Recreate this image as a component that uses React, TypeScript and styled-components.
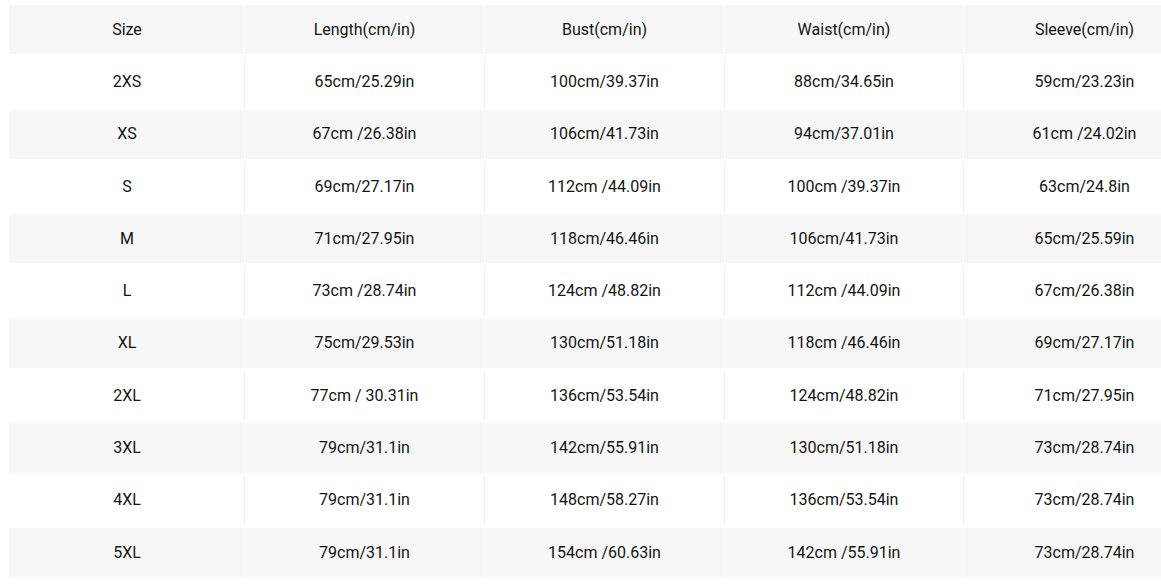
import React from "react";
import styled, { createGlobalStyle } from "styled-components";

const Global = createGlobalStyle`
  html, body { margin: 0; padding: 0; background: #ffffff; }
  body { font-family: Roboto, "Liberation Sans", Arial, sans-serif; overflow: hidden; }
`;

const Page = styled.div`
  width: 1161px;
  height: 586px;
  overflow: hidden;
  padding: 4px 0 0 9px;
  box-sizing: border-box;
`;

const Table = styled.div`
  display: flex;
  flex-direction: column;
  width: 1196px;
`;

const Row = styled.div<{ $shade: boolean }>`
  display: grid;
  grid-template-columns: 235px 240px 240px 239px 242px;
  height: 52.3px;
  box-sizing: border-box;
  border-top: 1px solid #ffffff;
  border-bottom: 2px solid #ffffff;
  background: ${(p) => (p.$shade ? "#f7f7f7" : "#ffffff")};
`;

const Cell = styled.div<{ $shade: boolean; $first?: boolean }>`
  display: flex;
  align-items: center;
  justify-content: center;
  padding-bottom: 1px;
  font-size: 16px;
  color: #141414;
  border-left: 1px solid ${(p) => (p.$first ? "transparent" : p.$shade ? "#ffffff" : "#efefef")};
  white-space: pre;
`;

const header = ["Size", "Length(cm/in)", "Bust(cm/in)", "Waist(cm/in)", "Sleeve(cm/in)"];

const rows: string[][] = [
  ["2XS", "65cm/25.29in", "100cm/39.37in", "88cm/34.65in", "59cm/23.23in"],
  ["XS", "67cm /26.38in", "106cm/41.73in", "94cm/37.01in", "61cm /24.02in"],
  ["S", "69cm/27.17in", "112cm /44.09in", "100cm /39.37in", "63cm/24.8in"],
  ["M", "71cm/27.95in", "118cm/46.46in", "106cm/41.73in", "65cm/25.59in"],
  ["L", "73cm /28.74in", "124cm /48.82in", "112cm /44.09in", "67cm/26.38in"],
  ["XL", "75cm/29.53in", "130cm/51.18in", "118cm /46.46in", "69cm/27.17in"],
  ["2XL", "77cm / 30.31in", "136cm/53.54in", "124cm/48.82in", "71cm/27.95in"],
  ["3XL", "79cm/31.1in", "142cm/55.91in", "130cm/51.18in", "73cm/28.74in"],
  ["4XL", "79cm/31.1in", "148cm/58.27in", "136cm/53.54in", "73cm/28.74in"],
  ["5XL", "79cm/31.1in", "154cm /60.63in", "142cm /55.91in", "73cm/28.74in"],
];

export default function App() {
  const all = [header, ...rows];
  return (
    <>
      <Global />
      <Page>
        <Table>
          {all.map((r, i) => {
            const shade = i % 2 === 0;
            return (
              <Row key={i} $shade={shade}>
                {r.map((c, j) => (
                  <Cell key={j} $shade={shade} $first={j === 0}>
                    {c}
                  </Cell>
                ))}
              </Row>
            );
          })}
        </Table>
      </Page>
    </>
  );
}
